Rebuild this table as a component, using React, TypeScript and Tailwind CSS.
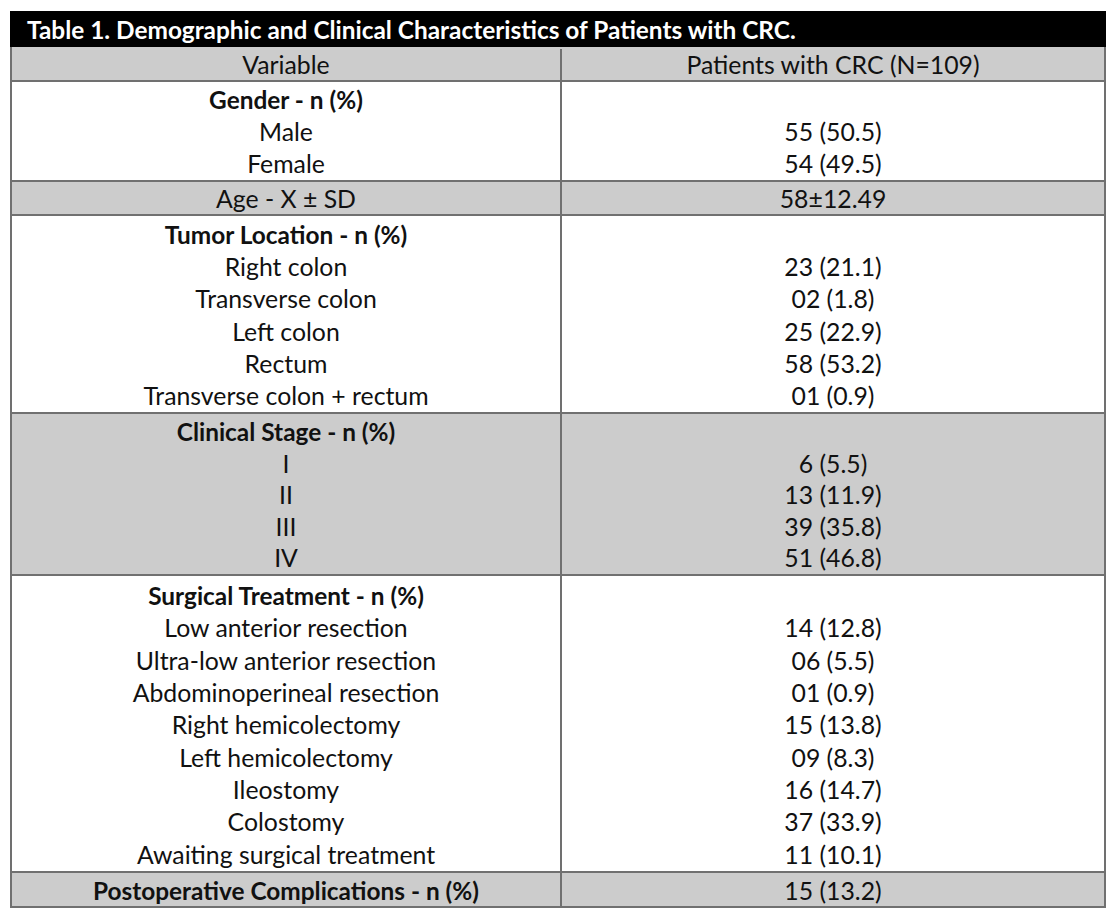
import React from "react";

interface Row {
  bold?: string;
  left: string[];
  right: string[];
  gray?: boolean;
  // padding + line height per section, measured off the original table
  spacing: string;
}

const rows: Row[] = [
  {
    bold: "Gender - n (%)",
    left: ["Male", "Female"],
    right: ["", "55 (50.5)", "54 (49.5)"],
    spacing: "pt-[2px] leading-[32px]",
  },
  {
    left: ["Age - X ± SD"],
    right: ["58±12.49"],
    gray: true,
    spacing: "pt-[2px] leading-[30px]",
  },
  {
    bold: "Tumor Location - n (%)",
    left: ["Right colon", "Transverse colon", "Left colon", "Rectum", "Transverse colon + rectum"],
    right: ["", "23 (21.1)", "02 (1.8)", "25 (22.9)", "58 (53.2)", "01 (0.9)"],
    spacing: "pt-[3px] leading-[32.17px]",
  },
  {
    bold: "Clinical Stage - n (%)",
    left: ["I", "II", "III", "IV"],
    right: ["", "6 (5.5)", "13 (11.9)", "39 (35.8)", "51 (46.8)"],
    gray: true,
    spacing: "pt-[2px] leading-[31.6px]",
  },
  {
    bold: "Surgical Treatment - n (%)",
    left: [
      "Low anterior resection",
      "Ultra-low anterior resection",
      "Abdominoperineal resection",
      "Right hemicolectomy",
      "Left hemicolectomy",
      "Ileostomy",
      "Colostomy",
      "Awaiting surgical treatment",
    ],
    right: ["", "14 (12.8)", "06 (5.5)", "01 (0.9)", "15 (13.8)", "09 (8.3)", "16 (14.7)", "37 (33.9)", "11 (10.1)"],
    spacing: "pt-[4px] leading-[32.33px]",
  },
  {
    bold: "Postoperative Complications - n (%)",
    left: [],
    right: ["15 (13.2)"],
    gray: true,
    spacing: "pt-[2px] leading-[31px]",
  },
];

const App = () => {
  return (
    <div className="w-[1116px] h-[922px] bg-white pt-[11px] pl-[10px] text-[#111] font-['Lato',sans-serif] text-[24.8px]">
      <div className="w-[1096px]">
        <div className="h-[36px] bg-black text-white font-bold text-[24.4px] pl-[17px] pt-[1px] leading-[35px]">
          Table 1. Demographic and Clinical Characteristics of Patients with CRC.
        </div>

        <div className="border-x-2 border-b-2 border-[#707070]">
          <div className="grid grid-cols-[550px_1fr] bg-[#cccccc] text-center pt-[2px] leading-[31px]">
            <div className="border-r-2 border-[#707070]">Variable</div>
            <div>Patients with CRC (N=109)</div>
          </div>

          {rows.map((row, i) => (
            <div
              key={i}
              className={`grid grid-cols-[550px_1fr] text-center border-t-2 border-[#707070] ${row.gray ? "bg-[#cccccc]" : "bg-white"}`}
            >
              <div className={`border-r-2 border-[#707070] ${row.spacing}`}>
                {row.bold && <div className="font-bold text-[24.4px]">{row.bold}</div>}
                {row.left.map((t) => (
                  <div key={t}>{t}</div>
                ))}
              </div>
              <div className={row.spacing}>
                {row.right.map((t, j) => (
                  <div key={j}>{t || "\u00a0"}</div>
                ))}
              </div>
            </div>
          ))}
        </div>
      </div>
    </div>
  );
};

export default App;
